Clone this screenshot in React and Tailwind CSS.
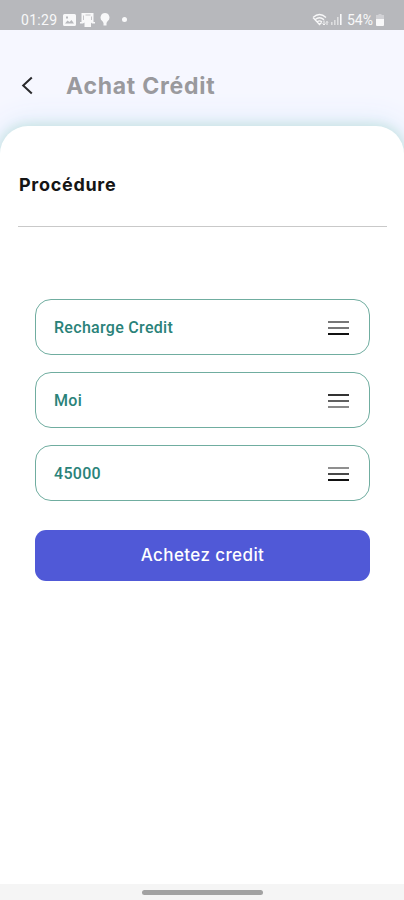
const fields = [
  { label: 'Recharge Credit', bars: ['bg-[#777777]', 'bg-[#777777]', 'bg-[#111111]'] },
  { label: 'Moi', bars: ['bg-[#333333]', 'bg-[#606060]', 'bg-[#8a8a8a]'] },
  { label: '45000', bars: ['bg-[#8f8f8f]', 'bg-[#484848]', 'bg-[#111111]'] },
]

function StatusBar() {
  return (
    <div className="h-[30px] bg-[#b7b8bc] text-[#f8f8f9] flex items-center justify-between pl-[21px] pr-[20px] pt-[9px] font-['Roboto',sans-serif] text-[14px] leading-[20px]">
      <div className="flex items-center">
        <span className="w-[37px] tracking-[0.3px] whitespace-nowrap">01:29</span>
        <svg width="13" height="12" viewBox="0 0 13 12" className="ml-[5px]">
          <path fill="currentColor" fillRule="evenodd" d="M1.500 0h10A1.500 1.500 0 0 1 13 1.500v9a1.500 1.500 0 0 1-1.500 1.500h-10A1.500 1.500 0 0 1 0 10.500v-9A1.500 1.500 0 0 1 1.500 0zM2 9.500h9L8.500 6 6.500 8 4.500 6.500zM3 2.500v2h2v-2z" />
        </svg>
        <svg width="15" height="14" viewBox="0 0 15 14" className="ml-[4px]">
          <path fill="currentColor" d="M1.500 0h12v9h1.500v1.500h-3L11 9.500V14H4.500V9.500L3 10.500H0V9h1.500z" />
          <path d="M3.500 2.500v4.500M5.500 2h5M11.500 3.500v3.500" stroke="#b7b8bc" strokeWidth="0.800" />
        </svg>
        <svg width="10" height="13" viewBox="0 0 10 13" className="ml-[5px]">
          <path fill="currentColor" d="M5 0a4.500 4.500 0 0 1 2.500 8.200L6.500 10v2.500h-3V10l-1-1.800A4.500 4.500 0 0 1 5 0z" />
        </svg>
        <span className="ml-[12px] w-[5px] h-[5px] rounded-full bg-[#f8f8f9]" />
      </div>
      <div className="flex items-center">
        <svg width="17" height="14" viewBox="0 0 17 14" fill="none" stroke="currentColor" strokeWidth="1.300">
          <path d="M1 4.500q6.500-6 13 0M3 6.700q4.500-4 9 0M5 9q2.500-2.300 5 0M1 4.500l6.500 7 2-2" />
          <path d="M12 12V7.500m-1.500 3L12 12l1.500-1.500M15 12V8.500m-1 1 1-1 1 1" strokeWidth="0.900" />
        </svg>
        <svg width="11" height="11" viewBox="0 0 11 11" className="ml-[2px]" fill="currentColor">
          <path d="M0 8h1.600v3H0zM3 6h1.600v5H3zM6 3h1.600v8H6z" opacity="0.600" />
          <path d="M9 0h1.600v11H9z" />
        </svg>
        <span className="ml-[5px] w-[28px] whitespace-nowrap">54%</span>
        <svg width="8" height="12" viewBox="0 0 8 12" className="ml-[1px]" fill="currentColor">
          <path d="M2.500 0h3v1H8v4H0V1h2.500z" opacity="0.400" />
          <path d="M0 5h8v6q0 1-1 1H1q-1 0-1-1z" />
        </svg>
      </div>
    </div>
  )
}

function Header() {
  return (
    <header className="h-[96px] flex items-start pt-[42px] pl-[21px]">
      <button aria-label="Retour" className="mt-[4px]">
        <svg width="13" height="19" viewBox="0 0 13 19" fill="none" stroke="#28282b" strokeWidth="2">
          <path d="M10.800 1.500 2.200 9.500l8.600 8" />
        </svg>
      </button>
      <h1 className="ml-[32px] text-[23px] leading-[28px] font-bold tracking-[0.75px] text-[#99999d] whitespace-nowrap">Achat Crédit</h1>
    </header>
  )
}

function SelectField({ label, bars }) {
  return (
    <div className="h-[56px] rounded-[16px] border border-[#70ada0] flex items-center justify-between pt-[2px] pl-[18px] pr-[20px]">
      <span className="font-['Roboto',sans-serif] text-[16px] font-medium text-[#2a8279] tracking-[0.3px] whitespace-nowrap">{label}</span>
      <span className="flex flex-col gap-[4px]">
        {bars.map((tone, i) => (
          <span key={i} className={`block w-[21px] h-[2px] ${tone}`} />
        ))}
      </span>
    </div>
  )
}

export default function App() {
  return (
    <div className="w-full h-[900px] flex flex-col overflow-hidden bg-[#f6f7ff] font-['Inter',sans-serif]">
      <StatusBar />
      <Header />
      <main className="flex-1 bg-white rounded-t-[28px] shadow-[0_0_12px_1px_#c3e2df,0_0_32px_3px_#dceafa] px-[18px]">
        <h2 className="pt-[47px] pl-px text-[18px] leading-[24px] font-bold tracking-[0.7px] text-[#151515]">Procédure</h2>
        <div className="mt-[29px] -mr-[1px] h-px bg-[#c9c9c9]" />
        <div className="mt-[72px] ml-[17px] w-[335px] flex flex-col gap-[17px]">
          {fields.map(field => (
            <SelectField key={field.label} {...field} />
          ))}
          <button className="mt-[12px] h-[51px] rounded-[11px] bg-[#5059d7] pt-px text-[17px] font-medium tracking-[0.4px] text-white">
            Achetez credit
          </button>
        </div>
      </main>
      <div className="h-[16px] bg-[#f5f5f5] flex justify-center items-center">
        <span className="w-[121px] h-[5px] rounded-full bg-[#a2a2a2]" />
      </div>
    </div>
  )
}
